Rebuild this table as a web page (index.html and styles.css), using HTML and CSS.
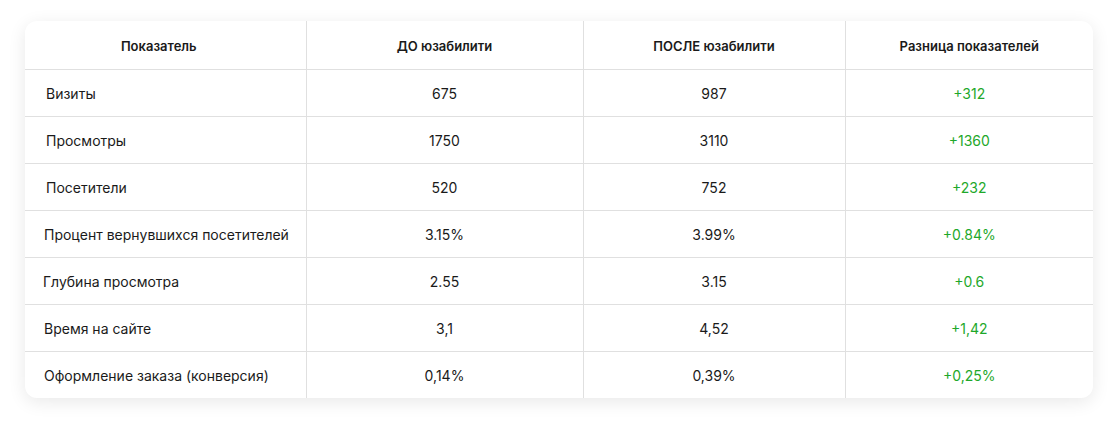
FILE: index.html
```html
<!DOCTYPE html>
<html lang="ru">
<head>
<meta charset="utf-8">
<title>Юзабилити</title>
<link rel="stylesheet" href="styles.css">
</head>
<body>
<div class="card">
  <table class="stats">
    <colgroup>
      <col class="c1"><col class="c2"><col class="c3"><col class="c4">
    </colgroup>
    <thead>
      <tr><th class="h1">Показатель</th><th>ДО юзабилити</th><th>ПОСЛЕ юзабилити</th><th>Разница показателей</th></tr>
    </thead>
    <tbody>
      <tr><td class="name n1">Визиты</td><td>675</td><td>987</td><td class="diff">+312</td></tr>
      <tr><td class="name n1">Просмотры</td><td>1750</td><td>3110</td><td class="diff">+1360</td></tr>
      <tr><td class="name n1">Посетители</td><td>520</td><td>752</td><td class="diff">+232</td></tr>
      <tr><td class="name">Процент вернувшихся посетителей</td><td>3.15%</td><td>3.99%</td><td class="diff">+0.84%</td></tr>
      <tr><td class="name n3">Глубина просмотра</td><td>2.55</td><td>3.15</td><td class="diff">+0.6</td></tr>
      <tr><td class="name">Время на сайте</td><td>3,1</td><td>4,52</td><td class="diff">+1,42</td></tr>
      <tr><td class="name">Оформление заказа (конверсия)</td><td>0,14%</td><td>0,39%</td><td class="diff">+0,25%</td></tr>
    </tbody>
  </table>
</div>
</body>
</html>
```

FILE: styles.css
```css
* { box-sizing: border-box; }
html, body { margin: 0; background: #ffffff; }
body {
  padding: 21px 25px 29px 25px;
  font-family: Inter, "Noto Sans", sans-serif;
  color: #1a1a1a;
}
.card {
  background: #fff;
  border-radius: 12px;
  box-shadow: 0 4px 18px rgba(0, 0, 0, 0.09);
  overflow: hidden;
}
.stats {
  width: 100%;
  border-collapse: collapse;
  table-layout: fixed;
}
.c1 { width: 281px; }
.c2 { width: 277px; }
.c3 { width: 262px; }
.c4 { width: 248px; }
.stats th, .stats td {
  text-align: center;
  border-right: 1px solid #e0e0e0;
  border-bottom: 1px solid #e0e0e0;
  padding: 2px 0 0 0;
}
.stats th:last-child, .stats td:last-child { border-right: none; }
.stats tbody tr:last-child td { border-bottom: none; }
.stats th {
  height: 48px;
  font-size: 13px;
  font-weight: 600;
}
.stats th.h1 { padding-right: 13px; }
.stats td {
  height: 47px;
  font-size: 14px;
  font-weight: 400;
}
.stats td.name { text-align: left; padding-left: 19px; }
.stats td.n1 { padding-left: 21px; }
.stats td.n3 { padding-left: 18px; }
.stats td.diff { color: #1ea82a; }
```
